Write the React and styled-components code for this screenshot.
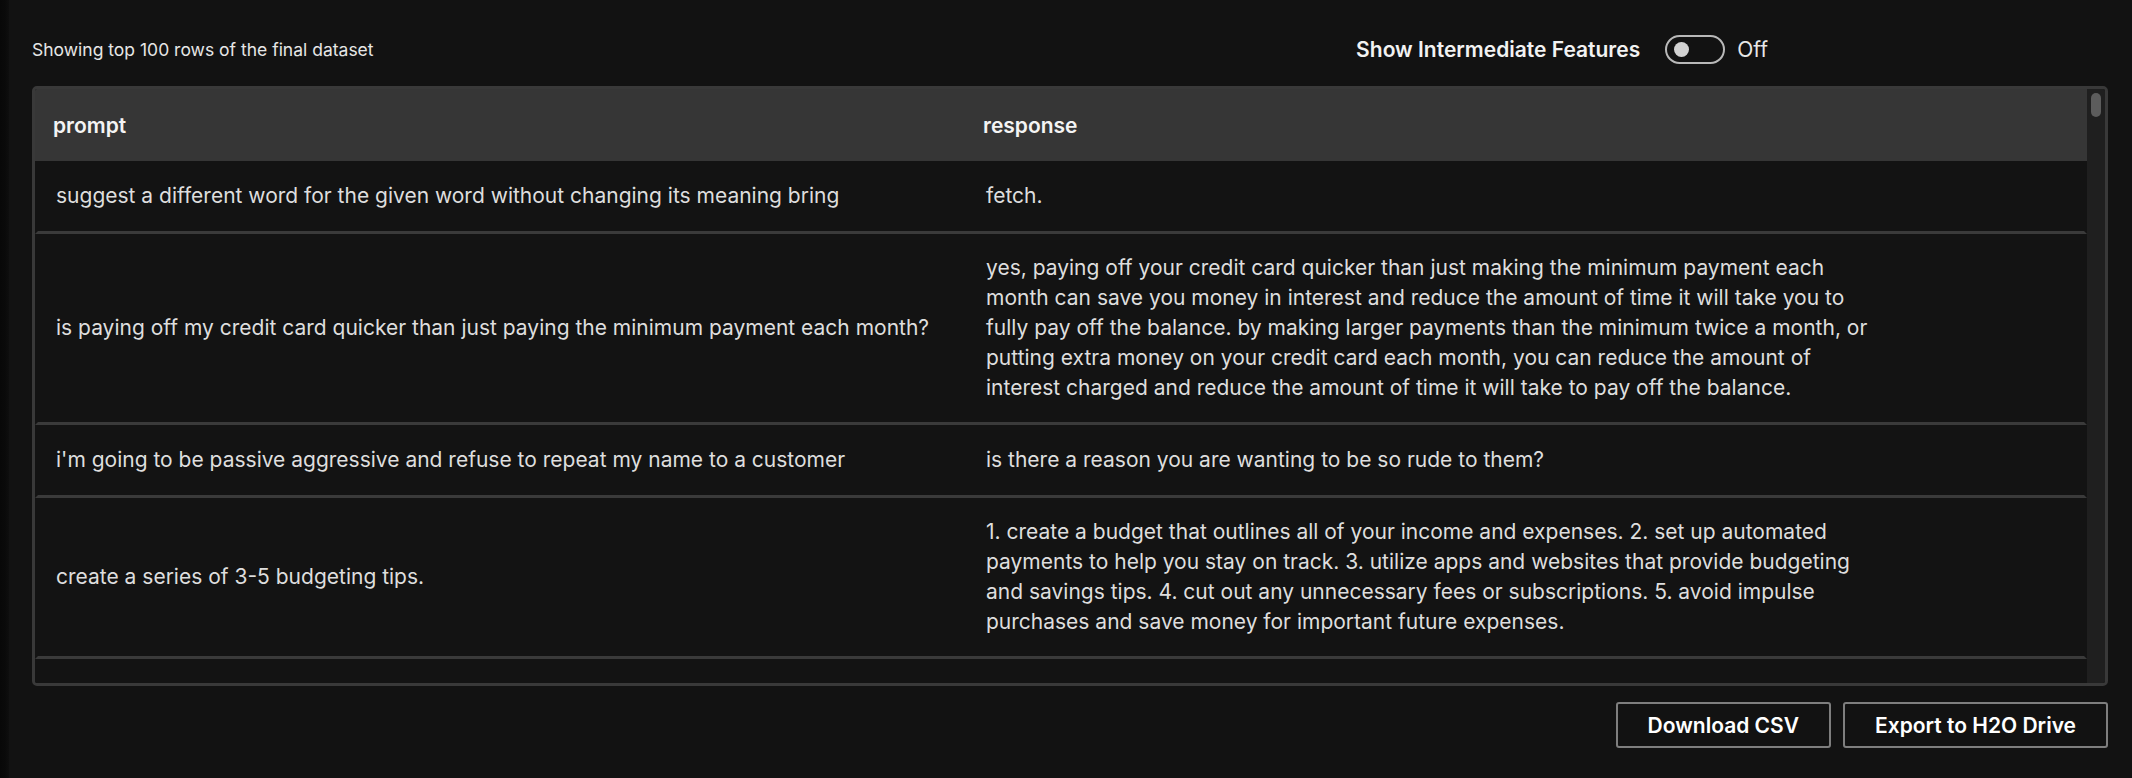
import React, { useState, useRef, useLayoutEffect, useCallback } from "react";
import styled, { createGlobalStyle } from "styled-components";

const GlobalStyle = createGlobalStyle`
  html, body {
    margin: 0;
    padding: 0;
    background: #121212;
    font-family: Inter, "Noto Sans", "Liberation Sans", sans-serif;
    color: #e2e2e2;
  }
  * { box-sizing: border-box; }
`;

const Page = styled.div`
  display: flex;
  min-height: 778px;
  background: #121212;
`;

const SideEdge = styled.aside`
  width: 9px;
  flex: none;
  background: linear-gradient(to right, #080808 0%, #0a0a0a 55%, #0e0e0e 100%);
`;

const Main = styled.main`
  flex: 1;
  padding: 35px 24px 0 23px;
  display: flex;
  flex-direction: column;
`;

const TopBar = styled.div`
  height: 29px;
  display: flex;
  align-items: center;
  justify-content: space-between;
  margin-bottom: 22px;
`;

const Caption = styled.p`
  margin: 0;
  font-size: 17.5px;
  color: #e6e6e6;
`;

const ToggleGroup = styled.label`
  display: flex;
  align-items: center;
  margin-right: 340px;
  cursor: pointer;
`;

const ToggleLabel = styled.span`
  font-size: 21px;
  font-weight: 600;
  color: #f2f2f2;
  margin-right: 25px;
`;

const Track = styled.span`
  width: 60px;
  height: 29px;
  border: 2px solid #b8b8b8;
  border-radius: 15px;
  display: flex;
  align-items: center;
  justify-content: ${(p) => (p.$on ? "flex-end" : "flex-start")};
  padding: 0 7px;
`;

const Knob = styled.span`
  width: 15px;
  height: 15px;
  border-radius: 50%;
  background: #d2d2d2;
`;

const ToggleState = styled.span`
  font-size: 21px;
  color: #e8e8e8;
  margin-left: 12px;
`;

const TableFrame = styled.div`
  height: 600px;
  display: flex;
  border: 3px solid #393939;
  border-radius: 5px;
  background: #131313;
  overflow: hidden;
`;

const Scroller = styled.div`
  flex: 1;
  min-width: 0;
  overflow-y: auto;
  overflow-x: hidden;
  scrollbar-width: none;
  &::-webkit-scrollbar {
    display: none;
  }
`;

const Rail = styled.div`
  width: 18px;
  flex: none;
  background: #1f1f1f;
  padding: 4px;
`;

const Thumb = styled.div`
  width: 10px;
  border-radius: 5px;
  background: #5c5c5c;
`;

const HeaderRow = styled.div`
  position: sticky;
  top: 0;
  z-index: 1;
  display: grid;
  grid-template-columns: 930px 1fr;
  height: 72px;
  background: #363636;
`;

const HeaderCell = styled.div`
  display: flex;
  align-items: center;
  padding: 0 18px;
  font-size: 21px;
  font-weight: 600;
  color: #f4f4f4;
`;

const Row = styled.div`
  display: grid;
  grid-template-columns: 930px 1fr;
  min-height: 73px;
  border-left: 3px solid #131313;
  border-right: 3px solid #131313;
  border-bottom: 3px solid #3a3a3a;
`;

const Cell = styled.div`
  display: flex;
  align-items: center;
  padding: 19px 18px;
  font-size: 21px;
  line-height: 30px;
  color: #dedede;
`;

const CellText = styled.span`
  max-width: 900px;
`;

const Footer = styled.div`
  display: flex;
  justify-content: flex-end;
  gap: 12px;
  margin-top: 16px;
`;

const Button = styled.button`
  height: 46px;
  padding: 0 30px;
  background: transparent;
  border: 2px solid #7e7e7e;
  border-radius: 3px;
  font-family: inherit;
  font-size: 21px;
  font-weight: 600;
  color: #ffffff;
  cursor: pointer;
`;

const samples = [
  {
    prompt:
      "suggest a different word for the given word without changing its meaning bring",
    response: "fetch.",
  },
  {
    prompt:
      "is paying off my credit card quicker than just paying the minimum payment each month?",
    response:
      "yes, paying off your credit card quicker than just making the minimum payment each month can save you money in interest and reduce the amount of time it will take you to fully pay off the balance. by making larger payments than the minimum twice a month, or putting extra money on your credit card each month, you can reduce the amount of interest charged and reduce the amount of time it will take to pay off the balance.",
  },
  {
    prompt:
      "i'm going to be passive aggressive and refuse to repeat my name to a customer",
    response: "is there a reason you are wanting to be so rude to them?",
  },
  {
    prompt: "create a series of 3-5 budgeting tips.",
    response:
      "1. create a budget that outlines all of your income and expenses. 2. set up automated payments to help you stay on track. 3. utilize apps and websites that provide budgeting and savings tips. 4. cut out any unnecessary fees or subscriptions. 5. avoid impulse purchases and save money for important future expenses.",
  },
  {
    prompt: "what should i do if my child refuses to eat vegetables?",
    response:
      "children are more likely to eat vegetables if they are involved in picking and preparing them. let them choose a vegetable at the store, help wash it, and try it alongside a familiar food. offering small portions repeatedly, without pressure, also helps them get used to new tastes over time.",
  },
];

const rows = Array.from({ length: 100 }, (_, i) => samples[i % samples.length]);

function DataTable() {
  const scrollRef = useRef(null);
  const [thumb, setThumb] = useState({ height: 24, top: 0 });

  const update = useCallback(() => {
    const el = scrollRef.current;
    if (!el) return;
    const railLen = el.clientHeight - 8;
    const ratio = el.clientHeight / el.scrollHeight;
    const height = Math.max(24, Math.round(railLen * ratio * 0.8));
    const maxScroll = el.scrollHeight - el.clientHeight || 1;
    const top = ((railLen - height) * el.scrollTop) / maxScroll;
    setThumb({ height, top });
  }, []);

  useLayoutEffect(() => {
    update();
  }, [update]);

  return (
    <TableFrame>
      <Scroller ref={scrollRef} onScroll={update}>
        <HeaderRow>
          <HeaderCell>prompt</HeaderCell>
          <HeaderCell>response</HeaderCell>
        </HeaderRow>
        {rows.map((r, i) => (
          <Row key={i}>
            <Cell>
              <CellText>{r.prompt}</CellText>
            </Cell>
            <Cell>
              <CellText>{r.response}</CellText>
            </Cell>
          </Row>
        ))}
      </Scroller>
      <Rail>
        <Thumb style={{ height: thumb.height, marginTop: thumb.top }} />
      </Rail>
    </TableFrame>
  );
}

export default function App() {
  const [on, setOn] = useState(false);
  return (
    <>
      <GlobalStyle />
      <Page>
        <SideEdge />
        <Main>
          <TopBar>
            <Caption>Showing top 100 rows of the final dataset</Caption>
            <ToggleGroup onClick={() => setOn(!on)}>
              <ToggleLabel>Show Intermediate Features</ToggleLabel>
              <Track $on={on}>
                <Knob />
              </Track>
              <ToggleState>{on ? "On" : "Off"}</ToggleState>
            </ToggleGroup>
          </TopBar>
          <DataTable />
          <Footer>
            <Button>Download CSV</Button>
            <Button>Export to H2O Drive</Button>
          </Footer>
        </Main>
      </Page>
    </>
  );
}
